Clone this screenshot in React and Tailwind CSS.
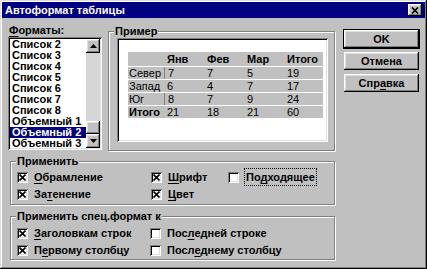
import React from "react";

const raised =
  "shadow-[inset_-1px_-1px_#000,inset_1px_1px_#fff,inset_-2px_-2px_#808080,inset_2px_2px_#dfdfdf]";
const sunken =
  "shadow-[inset_1px_1px_#808080,inset_-1px_-1px_#fff,inset_2px_2px_#000,inset_-2px_-2px_#dfdfdf]";

const formats = [
  "Список 2",
  "Список 3",
  "Список 4",
  "Список 5",
  "Список 6",
  "Список 7",
  "Список 8",
  "Объемный 1",
  "Объемный 2",
  "Объемный 3",
];

const rows = [
  { name: "Север", vals: [7, 7, 5, 19], boxed: true },
  { name: "Запад", vals: [6, 4, 7, 17] },
  { name: "Юг", vals: [8, 7, 9, 24], boxed: true },
  { name: "Итого", vals: [21, 18, 21, 60], total: true },
];

// label with one underlined access key
const Key = ({ text, at }) => (
  <span>
    {text.slice(0, at)}
    <span className="underline underline-offset-[2px]">{text[at]}</span>
    {text.slice(at + 1)}
  </span>
);

const Check = ({ checked, children, focus }) => (
  <div className="flex items-center h-[12px] gap-[6px]">
    <div className={`w-[11px] h-[11px] bg-white flex items-center justify-center ${sunken}`}>
      {checked && (
        <svg width="7" height="7" viewBox="0 0 7 7">
          <path d="M0.5 0.5L6.5 6.5M6.5 0.5L0.5 6.5" stroke="#000" strokeWidth="1.6" />
        </svg>
      )}
    </div>
    <span className={focus ? "outline outline-1 outline-dotted outline-black px-[1px]" : ""}>
      {children}
    </span>
  </div>
);

const Group = ({ label, className, children }) => (
  <div
    className={`relative border border-[#808080] shadow-[1px_1px_0_#fff,inset_1px_1px_0_#fff] ${className}`}
  >
    <span className="absolute -top-[8px] left-[5px] bg-[#c0c0c0] px-[1px] leading-[14px]">
      {label}
    </span>
    {children}
  </div>
);

const Arrow = ({ up }) => (
  <div className={`w-[14px] h-[14px] bg-[#c0c0c0] flex items-center justify-center ${raised}`}>
    <svg width="7" height="4" viewBox="0 0 7 4">
      <path d={up ? "M3.5 0L7 4H0Z" : "M0 0H7L3.5 4Z"} fill="#000" />
    </svg>
  </div>
);

const Button = ({ children, def }) => (
  <div
    className={`h-[18px] flex items-center justify-center bg-[#c0c0c0] ${
      def ? "outline outline-1 outline-black" : ""
    } ${raised}`}
  >
    {children}
  </div>
);

export default function App() {
  return (
    <div
      className={`w-[427px] h-[269px] bg-[#c0c0c0] p-[2px] text-[11px] font-bold text-black font-['Liberation_Sans',Arial,sans-serif] shadow-[inset_-1px_-1px_#000,inset_1px_1px_#dfdfdf,inset_-2px_-2px_#808080,inset_2px_2px_#fff]`}
    >
      {/* Title bar */}
      <div className="h-[16px] bg-[#000080] flex items-center justify-between pl-[3px] pr-[3px]">
        <span className="text-white">Автоформат таблицы</span>
        <div className={`w-[14px] h-[12px] bg-[#c0c0c0] flex items-center justify-center ${raised}`}>
          <svg width="8" height="7" viewBox="0 0 8 7">
            <path d="M1 0.5L7 6.5M7 0.5L1 6.5" stroke="#000" strokeWidth="1.7" />
          </svg>
        </div>
      </div>

      <div className="flex pl-[6px] pt-[5px]">
        {/* Left side */}
        <div className="w-[327px]">
          <div className="flex gap-[6px] h-[128px]">
            {/* Formats list */}
            <div className="w-[94px]">
              <div className="h-[14px] pl-[1px] leading-[14px]">
                <Key text="Форматы:" at={0} />
              </div>
              <div className={`h-[113px] bg-white p-[2px] flex ${sunken}`}>
                <div className="flex-1 flex flex-col overflow-hidden">
                  {formats.map((f) => (
                    <div
                      key={f}
                      className={`h-[11px] leading-[11px] pl-[2px] shrink-0 ${
                        f === "Объемный 2" ? "bg-[#000080] text-white" : ""
                      }`}
                    >
                      {f}
                    </div>
                  ))}
                </div>
                <div className="w-[14px] flex flex-col bg-[#d6d6d6]">
                  <Arrow up />
                  <div className="flex-1" />
                  <div className={`h-[13px] bg-[#c0c0c0] ${raised}`} />
                  <Arrow />
                </div>
              </div>
            </div>

            {/* Preview */}
            <Group label="Пример" className="mt-[8px] w-[227px] h-[120px] pt-[6px] pl-[8px]">
              <div className={`w-[211px] h-[104px] bg-white pl-[11px] pt-[14px] ${sunken}`}>
                <div className="w-[195px] bg-[#c0c0c0] font-['Liberation_Sans',Arial,sans-serif]">
                  <div className="grid grid-cols-[36px_40px_40px_40px_39px] h-[14px] leading-[14px]">
                    <span />
                    <span className="pl-[3px]">Янв</span>
                    <span className="pl-[3px]">Фев</span>
                    <span className="pl-[3px]">Мар</span>
                    <span className="pl-[3px]">Итого</span>
                  </div>
                  {rows.map((r) => (
                    <div
                      key={r.name}
                      className={`grid grid-cols-[36px_40px_40px_40px_39px] h-[13px] leading-[12px] border-t border-white ${
                        r.total ? "" : "font-normal"
                      }`}
                    >
                      <span className="pl-[1px]">{r.name}</span>
                      {r.vals.map((v, i) => (
                        <span
                          key={i}
                          className={`pl-[3px] font-normal ${
                            r.boxed && i === 0 ? "border-l border-[#808080]" : ""
                          }`}
                        >
                          {v}
                        </span>
                      ))}
                    </div>
                  ))}
                </div>
              </div>
            </Group>
          </div>

          {/* Apply */}
          <Group label="Применить" className="ml-[2px] mt-[10px] w-[325px] h-[44px] pt-[9px] pl-[6px]">
            <div className="grid grid-cols-[134px_77px_1fr] gap-y-[5px]">
              <Check checked>
                <Key text="Обрамление" at={0} />
              </Check>
              <Check checked>
                <Key text="Шрифт" at={0} />
              </Check>
              <Check focus>
                <Key text="Подходящее" at={2} />
              </Check>
              <Check checked>
                <Key text="Затенение" at={2} />
              </Check>
              <Check checked>
                <Key text="Цвет" at={0} />
              </Check>
            </div>
          </Group>

          {/* Special format */}
          <Group
            label="Применить спец.формат к"
            className="ml-[2px] mt-[11px] w-[325px] h-[44px] pt-[10px] pl-[6px]"
          >
            <div className="grid grid-cols-[133px_1fr] gap-y-[5px]">
              <Check checked>
                <Key text="Заголовкам строк" at={0} />
              </Check>
              <Check>
                <Key text="Последней строке" at={3} />
              </Check>
              <Check checked>
                <Key text="Первому столбцу" at={1} />
              </Check>
              <Check>
                <Key text="Последнему столбцу" at={4} />
              </Check>
            </div>
          </Group>
        </div>

        {/* Buttons */}
        <div className="ml-[9px] w-[75px] pt-[7px] flex flex-col gap-[4px]">
          <Button def>OK</Button>
          <Button>Отмена</Button>
          <Button>
            <Key text="Справка" at={3} />
          </Button>
        </div>
      </div>
    </div>
  );
}
